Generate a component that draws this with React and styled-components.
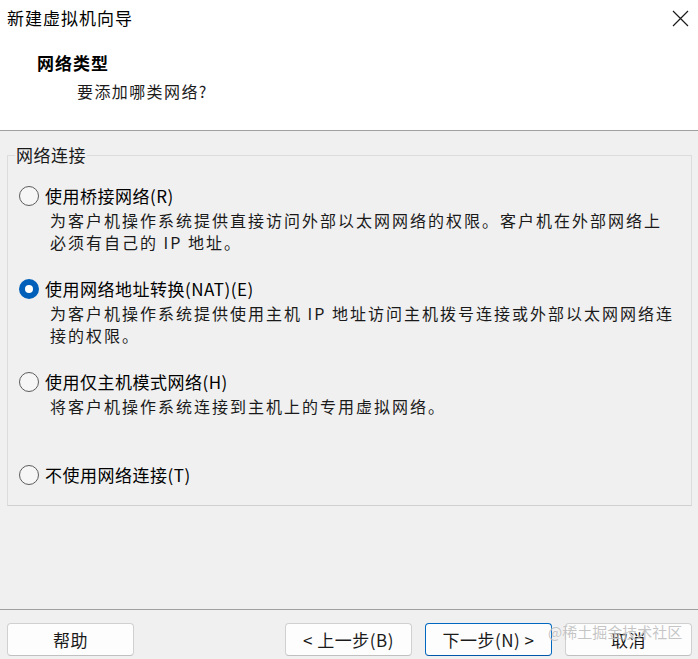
import React from "react";
import styled, { createGlobalStyle } from "styled-components";

const GlobalStyle = createGlobalStyle`
  html, body {
    margin: 0;
    padding: 0;
    background: #f0f0f0;
  }
  body {
    font-family: "Noto Sans CJK SC", "Noto Sans", sans-serif;
    color: #000;
  }
`;

const options = [
  {
    id: "bridged",
    label: "使用桥接网络(R)",
    lines: [
      "为客户机操作系统提供直接访问外部以太网网络的权限。客户机在外部网络上",
      "必须有自己的 IP 地址。",
    ],
  },
  {
    id: "nat",
    label: "使用网络地址转换(NAT)(E)",
    lines: [
      "为客户机操作系统提供使用主机 IP 地址访问主机拨号连接或外部以太网网络连",
      "接的权限。",
    ],
  },
  {
    id: "hostonly",
    label: "使用仅主机模式网络(H)",
    lines: ["将客户机操作系统连接到主机上的专用虚拟网络。"],
  },
  { id: "none", label: "不使用网络连接(T)", lines: [] },
];

const App = () => {
  const [selected, setSelected] = React.useState("nat");

  return (
    <>
      <GlobalStyle />
      <Window>
        <Header>
          <TitleRow>
            <Title>新建虚拟机向导</Title>
            <CloseButton aria-label="关闭">
              <svg width="17" height="17" viewBox="0 0 17 17">
                <path
                  d="M1 1 L16 16 M16 1 L1 16"
                  stroke="#1a1a1a"
                  strokeWidth="1.2"
                  fill="none"
                />
              </svg>
            </CloseButton>
          </TitleRow>
          <StepTitle>网络类型</StepTitle>
          <StepSub>要添加哪类网络?</StepSub>
        </Header>

        <Body>
          <Group>
            <Legend>网络连接</Legend>
            <OptionList>
              {options.map((o) => (
                <Option key={o.id} onClick={() => setSelected(o.id)}>
                  <LabelRow>
                    <Radio checked={selected === o.id} />
                    <LabelText>{o.label}</LabelText>
                  </LabelRow>
                  {o.lines.length > 0 && (
                    <Desc>
                      {o.lines.map((l) => (
                        <DescLine key={l}>{l}</DescLine>
                      ))}
                    </Desc>
                  )}
                </Option>
              ))}
            </OptionList>
          </Group>
        </Body>

        <Footer>
          <Button>帮助</Button>
          <RightButtons>
            <Button>&lt; 上一步(B)</Button>
            <Button primary>下一步(N) &gt;</Button>
            <Button>取消</Button>
          </RightButtons>
          <Watermark>@稀土掘金技术社区</Watermark>
        </Footer>
      </Window>
    </>
  );
};

export default App;

const Window = styled.div`
  width: 698px;
  height: 659px;
  display: flex;
  flex-direction: column;
  background: #f0f0f0;
  overflow: hidden;
`;

const Header = styled.div`
  height: 130px;
  background: #ffffff;
  border-bottom: 1px solid #a0a0a0;
  box-sizing: content-box;
`;

const TitleRow = styled.div`
  display: flex;
  justify-content: space-between;
  align-items: center;
  padding: 7px 9px 0 7px;
  height: 22px;
`;

const Title = styled.div`
  font-size: 17px;
  letter-spacing: 1px;
  line-height: 22px;
`;

const CloseButton = styled.div`
  display: flex;
  align-items: center;
  margin-top: 1px;
`;

const StepTitle = styled.div`
  font-size: 17px;
  font-weight: bold;
  letter-spacing: 1px;
  line-height: 22px;
  padding-left: 37px;
  margin-top: 23px;
`;

const StepSub = styled.div`
  font-size: 16px;
  letter-spacing: 1.4px;
  line-height: 22px;
  padding-left: 77px;
  margin-top: 6px;
  color: #1a1a1a;
`;

const Body = styled.div`
  flex: 1;
  padding: 13px 6px 0 7px;
`;

const Group = styled.fieldset`
  margin: 0;
  padding: 0 10px 19px 11px;
  border: 1px solid #dcdcdc;
  border-bottom-color: #d0d0d0;
  min-width: 0;
`;

const Legend = styled.legend`
  font-size: 17px;
  letter-spacing: 0.5px;
  line-height: 22px;
  padding: 0 1px;
  margin-left: -4px;
  color: #1a1a1a;
`;

const OptionList = styled.div`
  display: flex;
  flex-direction: column;
  gap: 25px;
  padding-top: 19px;
`;

const Option = styled.div`
  display: flex;
  flex-direction: column;
  cursor: default;
`;

const LabelRow = styled.div`
  display: flex;
  align-items: center;
  height: 22px;
  gap: 6px;
`;

const Radio = styled.span`
  width: 20px;
  height: 20px;
  box-sizing: border-box;
  border-radius: 50%;
  flex-shrink: 0;
  border: ${(p) => (p.checked ? "none" : "1px solid #5c5c5c")};
  background: ${(p) => (p.checked ? "#005fb8" : "#f6f6f6")};
  display: flex;
  align-items: center;
  justify-content: center;

  &::after {
    content: "";
    display: ${(p) => (p.checked ? "block" : "none")};
    width: 8px;
    height: 8px;
    border-radius: 50%;
    background: #ffffff;
  }
`;

const LabelText = styled.span`
  font-size: 17px;
  letter-spacing: 0.5px;
  line-height: 22px;
  white-space: nowrap;
`;

const Desc = styled.div`
  margin-top: 2px;
  padding-left: 31px;
  min-height: 44px;
  display: flex;
  flex-direction: column;
`;

const DescLine = styled.div`
  font-size: 16px;
  letter-spacing: 2px;
  line-height: 22px;
  white-space: nowrap;
  color: #1a1a1a;
`;

const Footer = styled.div`
  position: relative;
  border-top: 1px solid #a0a0a0;
  display: flex;
  justify-content: space-between;
  padding: 13px 6px 0 7px;
  box-sizing: border-box;
  height: 50px;
`;

const RightButtons = styled.div`
  display: flex;
  gap: 13px;
`;

const Button = styled.button`
  width: 127px;
  height: 33px;
  box-sizing: border-box;
  border: 1px solid ${(p) => (p.primary ? "#0067c0" : "#d0d0d0")};
  border-bottom-color: ${(p) => (p.primary ? "#0058a8" : "#c0c0c0")};
  border-radius: 4px;
  background: #fdfdfd;
  font-family: "Noto Sans CJK SC", "Noto Sans", sans-serif;
  font-size: 17px;
  letter-spacing: 0.5px;
  color: #1a1a1a;
  padding: 0;
  display: flex;
  align-items: center;
  justify-content: center;
`;

const Watermark = styled.div`
  position: absolute;
  left: 548px;
  top: 12px;
  font-size: 15px;
  line-height: 20px;
  color: rgba(140, 140, 140, 0.5);
  text-shadow: 0 0 1px rgba(255, 255, 255, 0.9);
  pointer-events: none;
  white-space: nowrap;
`;
